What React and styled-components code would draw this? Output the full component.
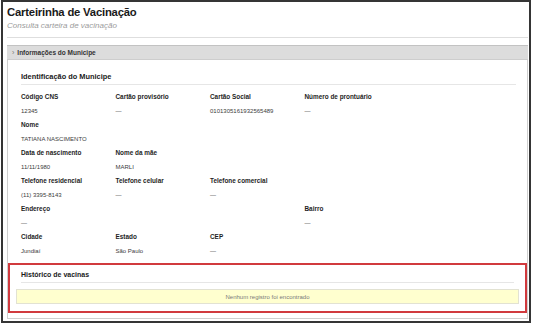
import React from 'react';
import styled, { createGlobalStyle } from 'styled-components';

const GlobalStyle = createGlobalStyle`
  * { box-sizing: border-box; }
  body {
    margin: 0;
    background: #fff;
    font-family: "Liberation Sans", Arial, sans-serif;
    color: #222;
  }
`;

const fields = [
    { label: 'Código CNS', value: '12345' },
    { label: 'Cartão provisório', value: '—' },
    { label: 'Cartão Social', value: '0101305161932565489' },
    { label: 'Número de prontuário', value: '—' },
    { label: 'Nome', value: 'TATIANA NASCIMENTO', span: 4 },
    { label: 'Data de nascimento', value: '11/11/1980' },
    { label: 'Nome da mãe', value: 'MARLI', span: 3 },
    { label: 'Telefone residencial', value: '(11) 3395-8143' },
    { label: 'Telefone celular', value: '—' },
    { label: 'Telefone comercial', value: '—', span: 2 },
    { label: 'Endereço', value: '—', span: 3 },
    { label: 'Bairro', value: '—' },
    { label: 'Cidade', value: 'Jundiaí' },
    { label: 'Estado', value: 'São Paulo' },
    { label: 'CEP', value: '—', span: 2 },
];

export default function App() {
    return (
        <>
            <GlobalStyle />
            <Frame>
                <Title>Carteirinha de Vacinação</Title>
                <Subtitle>Consulta carteira de vacinação</Subtitle>
                <Rule />
                <Panel>
                    <PanelHeader>
                        <Chevron>›</Chevron>
                        Informações do Municipe
                    </PanelHeader>
                    <PanelBody>
                        <Details>
                            <SectionTitle>Identificação do Municipe</SectionTitle>
                            <Grid>
                                {fields.map(f => (
                                    <Field key={f.label} span={f.span}>
                                        <Label>{f.label}</Label>
                                        <Value>{f.value}</Value>
                                    </Field>
                                ))}
                            </Grid>
                        </Details>
                        <History>
                            <HistoryTitle>Histórico de vacinas</HistoryTitle>
                            <Empty>Nenhum registro foi encontrado</Empty>
                        </History>
                    </PanelBody>
                </Panel>
            </Frame>
        </>
    );
}

const Frame = styled.div`
  margin-left: 1px;
  width: 530px;
  height: 323px;
  border: 2px solid #353535;
  padding: 3px 1px 0 4px;
  display: flex;
  flex-direction: column;
`;

const Title = styled.h1`
  margin: 0;
  font-size: 11.3px;
  line-height: 14px;
  font-weight: bold;
  color: #1a1a1a;
  letter-spacing: -0.2px;
`;

const Subtitle = styled.div`
  margin-top: 2px;
  font-size: 8px;
  line-height: 10px;
  font-style: italic;
  color: #9b9b9b;
`;

const Rule = styled.div`
  margin-top: 6px;
  height: 1px;
  background: #dedede;
`;

const Panel = styled.div`
  margin-top: 7px;
  border: 1px solid #cfcfcf;
  border-top: none;
`;

const PanelHeader = styled.div`
  height: 15px;
  margin: 0 -1px;
  background: #dcdcdc;
  border-top: 1px solid #c2c2c2;
  border-bottom: 1px solid #cdcdcd;
  padding-left: 5px;
  display: flex;
  align-items: center;
  font-size: 6.5px;
  font-weight: bold;
  color: #333;
`;

const Chevron = styled.span`
  font-weight: normal;
  color: #777;
  margin-right: 3px;
  font-size: 7px;
`;

const PanelBody = styled.div`
  padding-bottom: 5px;
`;

const Details = styled.div`
  padding: 12px 11px 0 13px;
`;

const SectionTitle = styled.div`
  font-size: 7.4px;
  line-height: 10px;
  font-weight: bold;
  color: #1a1a1a;
  padding-bottom: 2px;
  border-bottom: 1px solid #e6e6e6;
`;

const Grid = styled.div`
  margin-top: 5px;
  display: grid;
  grid-template-columns: repeat(4, 94.5px);
`;

const Field = styled.div`
  grid-column: span ${props => props.span || 1};
`;

const Label = styled.div`
  font-size: 6.4px;
  line-height: 14px;
  font-weight: bold;
  color: #1e1e1e;
`;

const Value = styled.div`
  font-size: 6px;
  line-height: 14px;
  color: #3c3c3c;
`;

const History = styled.section`
  margin-top: 5px;
  border: 2px solid #d13a3e;
  padding: 5px 6px 7px 6px;
`;

const HistoryTitle = styled.div`
  margin: 0 5px;
  font-size: 7px;
  line-height: 10px;
  font-weight: bold;
  color: #1a1a1a;
  padding-bottom: 2px;
  border-bottom: 1px solid #e6e6e6;
`;

const Empty = styled.div`
  margin-top: 6px;
  height: 15px;
  background: #ffffcf;
  border: 1px solid #e2e2d2;
  display: flex;
  align-items: center;
  justify-content: center;
  font-size: 6px;
  color: #7a7a7a;
`;
